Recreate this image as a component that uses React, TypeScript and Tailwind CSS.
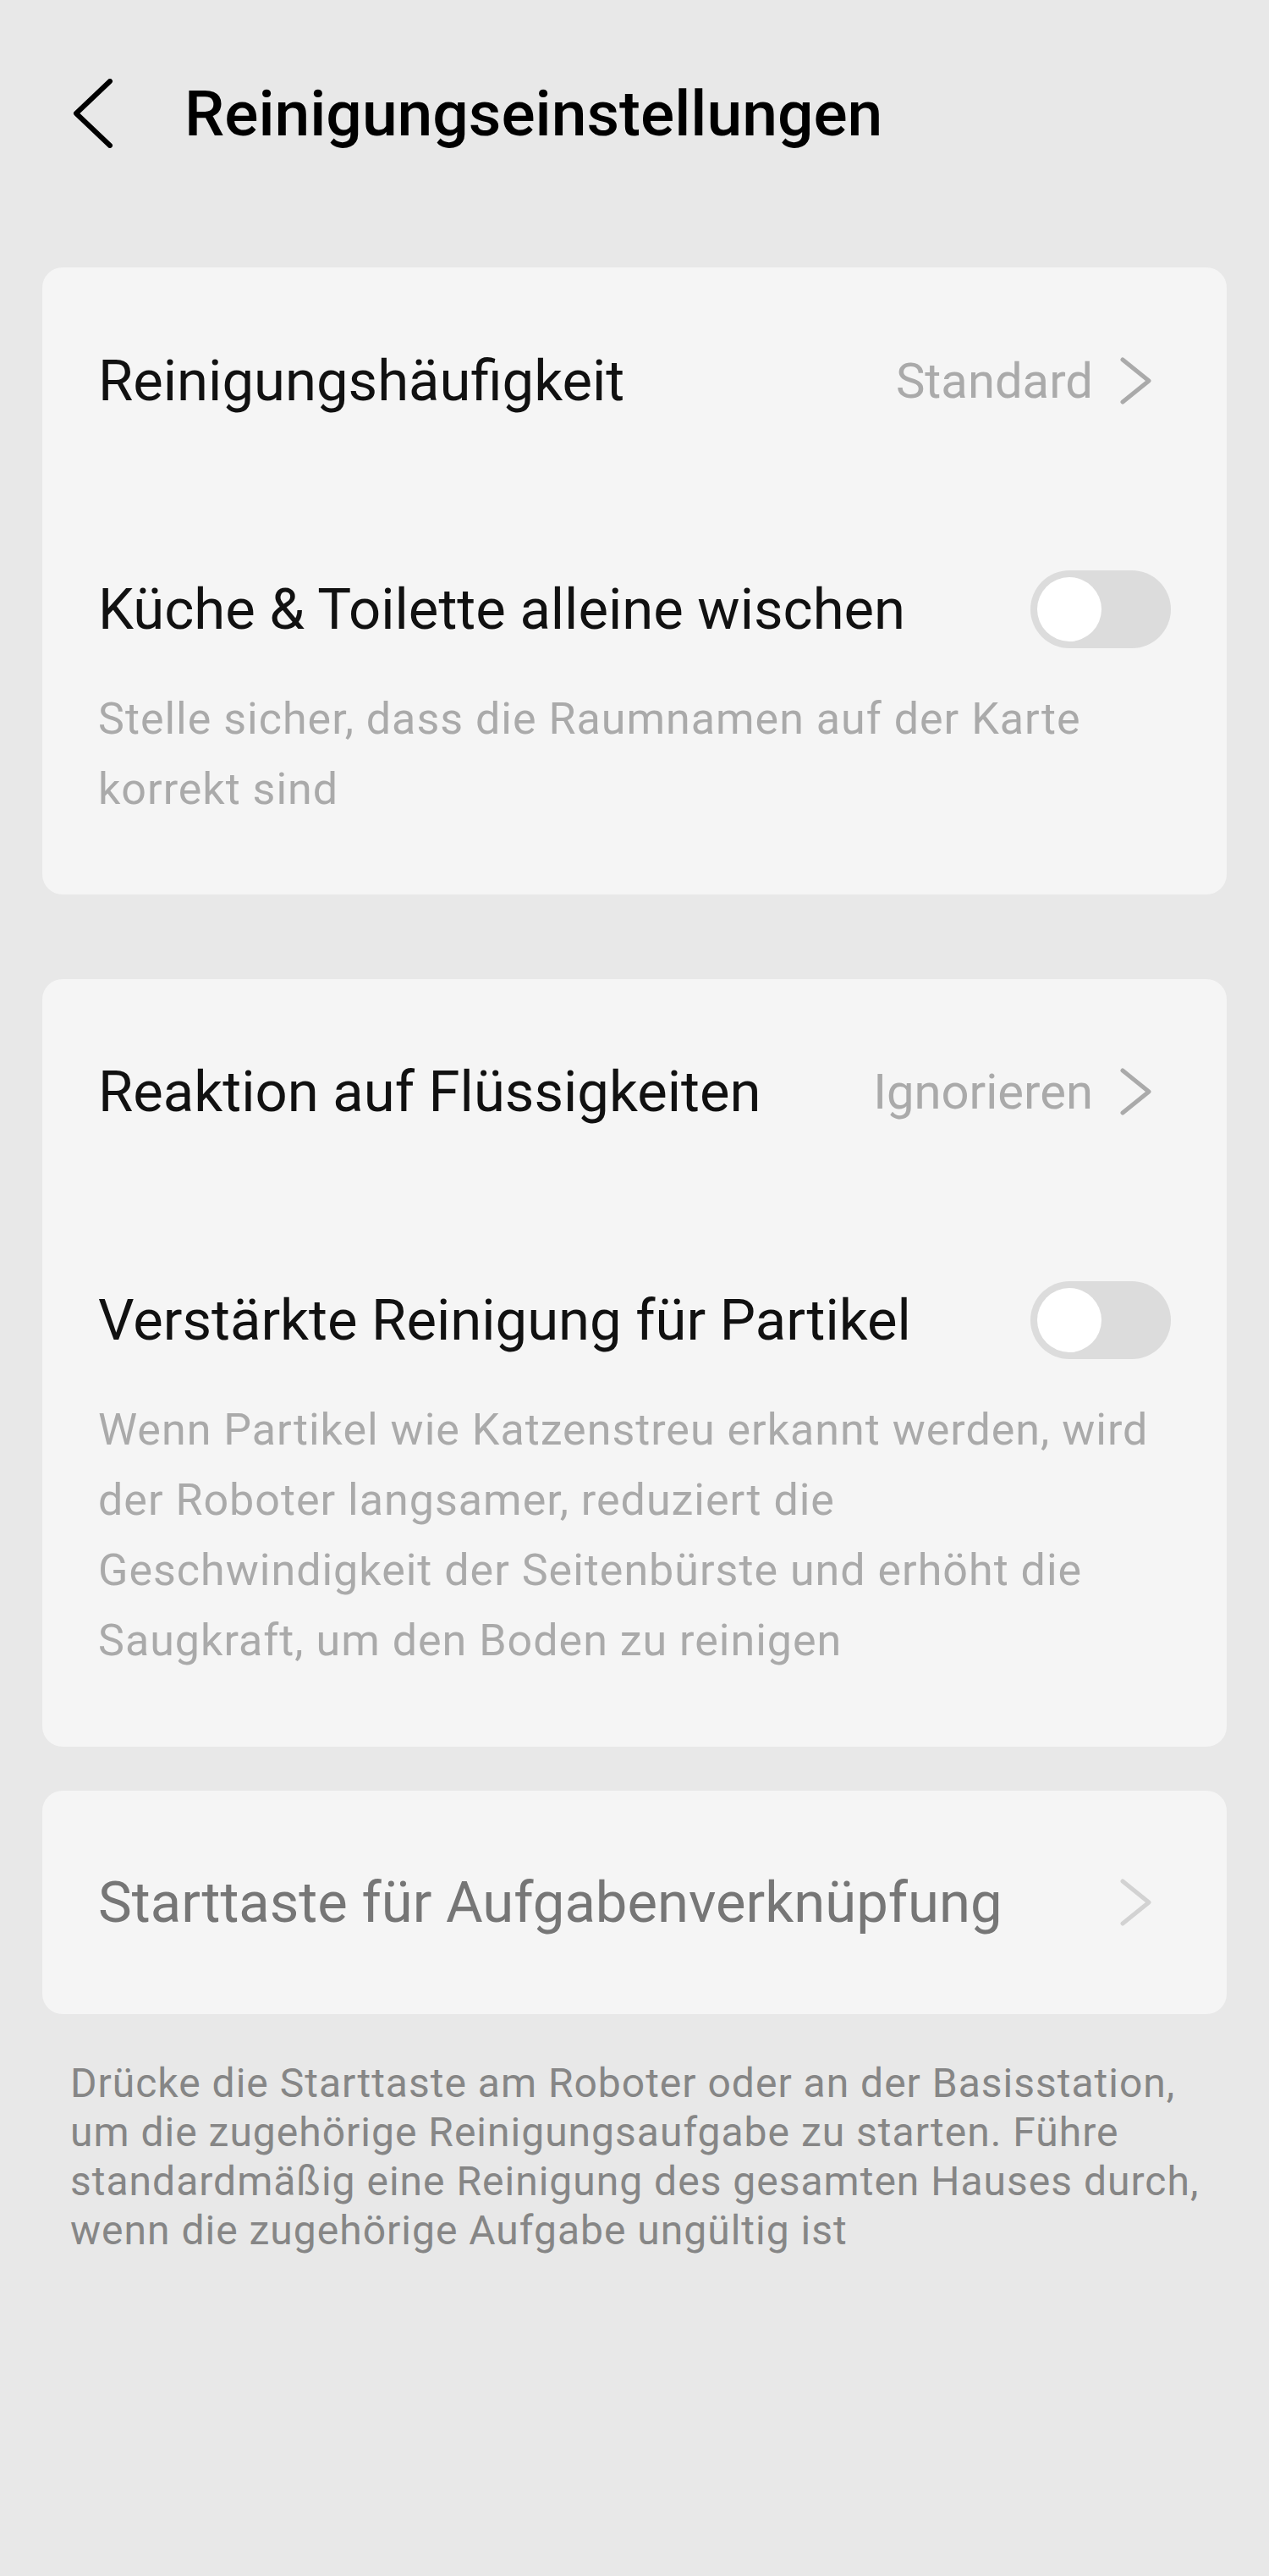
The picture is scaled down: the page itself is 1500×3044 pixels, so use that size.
import React from "react";

const ChevronRight = ({ color }: { color: string }) => (
  <svg width="60" height="56" viewBox="0 0 60 56" fill="none">
    <polyline points="3,3 34,28 3,53" stroke={color} strokeWidth="5" strokeLinecap="round" strokeLinejoin="round" />
  </svg>
);

const Toggle = () => (
  <div className="w-[166px] h-[92px] rounded-full bg-[#dcdcdc] p-[8px] flex items-center shrink-0">
    <div className="w-[76px] h-[76px] rounded-full bg-white" />
  </div>
);

const ValueRow = ({ label, value }: { label: string; value: string }) => (
  <div className="h-[148px] flex items-center justify-between">
    <span className="text-[67px] text-[#111]">{label}</span>
    <div className="flex items-center">
      <span className="text-[58px] text-[#aaa] mr-[32px]">{value}</span>
      <ChevronRight color="#aaa" />
    </div>
  </div>
);

const ToggleRow = ({ label }: { label: string }) => (
  <div className="h-[148px] mt-[122px] flex items-center justify-between">
    <span className="text-[67px] text-[#111]">{label}</span>
    <Toggle />
  </div>
);

export default function App() {
  return (
    <div className="w-[1500px] min-h-[3044px] bg-[#e8e8e8] font-[Roboto,sans-serif] pt-[74px]">
      {/* header */}
      <div className="h-[120px] flex items-center pl-[86px]">
        <svg width="48" height="82" viewBox="0 0 48 82" fill="none">
          <polyline points="44,3 4,41 44,79" stroke="#000" strokeWidth="6" strokeLinecap="round" strokeLinejoin="round" />
        </svg>
        <h1 className="ml-[84px] text-[75px] font-medium text-black">Reinigungseinstellungen</h1>
      </div>

      <div className="px-[50px] mt-[122px] flex flex-col">
        <div className="bg-[#f5f5f5] rounded-[24px] px-[66px] pt-[60px] pb-[83px]">
          <ValueRow label="Reinigungshäufigkeit" value="Standard" />
          <ToggleRow label="Küche & Toilette alleine wischen" />
          <p className="mt-[14px] text-[52px] tracking-[1px] leading-[83px] text-[#aaa]">
            Stelle sicher, dass die Raumnamen auf der Karte korrekt sind
          </p>
        </div>

        <div className="bg-[#f5f5f5] rounded-[24px] px-[66px] pt-[59px] pb-[84px] mt-[100px]">
          <ValueRow label="Reaktion auf Flüssigkeiten" value="Ignorieren" />
          <ToggleRow label="Verstärkte Reinigung für Partikel" />
          <p className="mt-[14px] text-[52px] tracking-[1px] leading-[83px] text-[#aaa]">
            Wenn Partikel wie Katzenstreu erkannt werden, wird der Roboter langsamer, reduziert die
            Geschwindigkeit der Seitenbürste und erhöht die Saugkraft, um den Boden zu reinigen
          </p>
        </div>

        <div className="bg-[#f5f5f5] rounded-[24px] px-[66px] h-[264px] mt-[52px] flex items-center justify-between">
          <span className="text-[67px] text-[#767676]">Starttaste für Aufgabenverknüpfung</span>
          <ChevronRight color="#d2d2d2" />
        </div>

        <p className="mt-[53px] pl-[33px] pr-[5px] text-[48px] tracking-[1px] leading-[58px] text-[#868686]">
          Drücke die Starttaste am Roboter oder an der Basisstation, um die zugehörige Reinigungsaufgabe zu
          starten. Führe standardmäßig eine Reinigung des gesamten Hauses durch, wenn die zugehörige Aufgabe
          ungültig ist
        </p>
      </div>
    </div>
  );
}
